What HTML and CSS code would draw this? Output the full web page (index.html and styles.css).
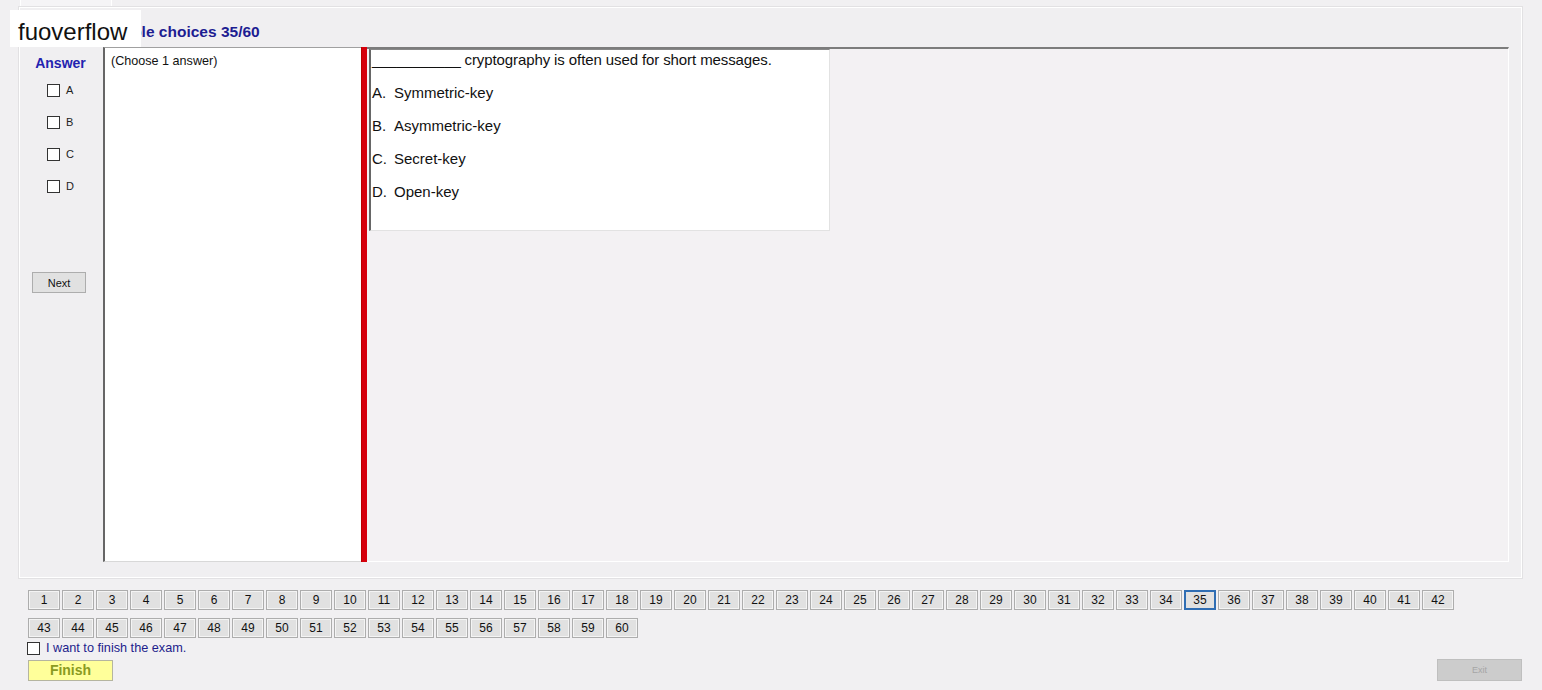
FILE: index.html
```html
<!DOCTYPE html>
<html lang="en">
<head>
    <meta charset="UTF-8">
    <title>Exam</title>
    <link rel="stylesheet" href="styles.css">
</head>

<body>
    <div class="top-tab"></div>

    <!-- Question group -->
    <div class="group">
        <div class="title">Multiple choices 35/60</div>
        <div class="content">
            <div class="answers">
                <div class="answers-head">Answer</div>
                <label class="opt"><span class="box"></span>A</label>
                <label class="opt"><span class="box"></span>B</label>
                <label class="opt"><span class="box"></span>C</label>
                <label class="opt"><span class="box"></span>D</label>
                <button class="next-btn">Next</button>
            </div>
            <div class="split">
                <div class="left-pane">(Choose 1 answer)</div>
                <div class="splitter"></div>
                <div class="right-pane">
                    <div class="question">
                        <p class="q-text"><span class="blank">___________</span> cryptography is often used for short messages.</p>
                        <p class="q-opt"><span class="q-key">A.</span>Symmetric-key</p>
                        <p class="q-opt"><span class="q-key">B.</span>Asymmetric-key</p>
                        <p class="q-opt"><span class="q-key">C.</span>Secret-key</p>
                        <p class="q-opt"><span class="q-key">D.</span>Open-key</p>
                    </div>
                </div>
            </div>
        </div>
    </div>

    <!-- Question navigation -->
    <div class="nav">
        <button>1</button><button>2</button><button>3</button><button>4</button><button>5</button>
        <button>6</button><button>7</button><button>8</button><button>9</button><button>10</button>
        <button>11</button><button>12</button><button>13</button><button>14</button><button>15</button>
        <button>16</button><button>17</button><button>18</button><button>19</button><button>20</button>
        <button>21</button><button>22</button><button>23</button><button>24</button><button>25</button>
        <button>26</button><button>27</button><button>28</button><button>29</button><button>30</button>
        <button>31</button><button>32</button><button>33</button><button>34</button><button class="current">35</button>
        <button>36</button><button>37</button><button>38</button><button>39</button><button>40</button>
        <button>41</button><button>42</button><button>43</button><button>44</button><button>45</button>
        <button>46</button><button>47</button><button>48</button><button>49</button><button>50</button>
        <button>51</button><button>52</button><button>53</button><button>54</button><button>55</button>
        <button>56</button><button>57</button><button>58</button><button>59</button><button>60</button>
    </div>

    <label class="finish-check"><span class="box"></span>I want to finish the exam.</label>

    <div class="bottom">
        <button class="finish-btn">Finish</button>
        <button class="exit-btn" disabled>Exit</button>
    </div>

    <div class="watermark">fuoverflow</div>
</body>

</html>
```

FILE: styles.css
```css
/* General Styles */
body {
    margin: 0;
    height: 690px;
    overflow: hidden;
    background: #f1f0f2;
    font-family: "Liberation Sans", Arial, sans-serif;
    color: #000;
}

button {
    font-family: "Liberation Sans", Arial, sans-serif;
    cursor: pointer;
}

.top-tab {
    margin-left: 20px;
    width: 90px;
    height: 7px;
    border-left: 1px solid #fff;
    border-right: 1px solid #fff;
    background: #f5f4f6;
}

.group {
    box-sizing: border-box;
    height: 571px;
    margin: 0 20px 0 19px;
    border: 1px solid #fff;
    box-shadow: 0 0 0 1px #e2e1e3;
    background: #f0eff1;
}

.title {
    height: 39px;
    box-sizing: border-box;
    padding: 15px 0 0 76px;
    font-size: 15.5px;
    font-weight: bold;
    color: #1d1d92;
}

.content {
    display: flex;
    height: 515px;
}

/* Answer column */
.answers {
    width: 83px;
    display: flex;
    flex-direction: column;
    align-items: flex-start;
}

.answers-head {
    align-self: center;
    margin: 8px 0 9px -2px;
    font-size: 14px;
    font-weight: bold;
    color: #2323b0;
}

.opt {
    display: flex;
    align-items: center;
    height: 32px;
    margin-top: -6px;
    margin-bottom: 6px;
    padding-left: 27px;
    font-size: 11px;
    color: #222;
}

.box {
    display: inline-block;
    width: 11px;
    height: 11px;
    border: 1px solid #333;
    background: #fff;
    margin-right: 6px;
}

.next-btn {
    margin: 64px 0 0 12px;
    width: 54px;
    height: 21px;
    padding: 0;
    font-size: 11px;
    background: #e1e1e1;
    border: 1px solid #adadad;
    color: #111;
}

/* Split container */
.split {
    flex: 1;
    display: flex;
    margin-right: 12px;
}

.left-pane {
    width: 250px;
    background: #fff;
    border-top: 1px solid #a0a0a0;
    border-left: 2px solid #666;
    border-bottom: 1px solid #d8d8d8;
    padding: 6px 0 0 6px;
    font-size: 12.6px;
    color: #111;
}

.splitter {
    width: 6px;
    background: #d6000c;
    border-left: 1px solid #b00;
    box-sizing: border-box;
}

.right-pane {
    flex: 1;
    border-top: 2px solid #7c7c7c;
    border-right: 1px solid #fff;
    border-bottom: 1px solid #fff;
    background: #f3f1f3;
}

.question {
    box-sizing: border-box;
    width: 461px;
    height: 182px;
    margin-left: 2px;
    background: #fff;
    border-left: 2px solid #666;
    border-top: 1px solid #888;
    border-right: 1px solid #e2e2e2;
    border-bottom: 1px solid #e2e2e2;
    padding-left: 1px;
    font-size: 15px;
    color: #111;
}

.blank {
    letter-spacing: -0.3px;
}

.q-text {
    margin: 1px 0 0;
    line-height: 18px;
    letter-spacing: -0.1px;
}

.q-opt {
    margin: 15px 0 0;
    line-height: 18px;
}

.q-key {
    display: inline-block;
    width: 22px;
}

/* Navigation */
.nav {
    display: grid;
    grid-template-columns: repeat(42, 32px);
    column-gap: 2px;
    row-gap: 8px;
    margin: 12px 0 0 28px;
}

.nav button {
    height: 20px;
    padding: 0;
    font-size: 12px;
    background: #e1e1e1;
    border: 1px solid #adadad;
    box-shadow: inset 0 0 0 1px #f4f4f4;
    color: #111;
}

.nav button.current {
    border: 2px solid #2f6db3;
    box-shadow: none;
}

.finish-check {
    display: flex;
    align-items: center;
    margin: 2px 0 0 27px;
    height: 16px;
    font-size: 12.7px;
    color: #1d1d8c;
}

.bottom {
    display: flex;
    justify-content: space-between;
    align-items: center;
    margin: 3px 20px 0 28px;
}

.finish-btn {
    width: 85px;
    height: 21px;
    padding: 0;
    background: #ffff9a;
    border: 1px solid #b5b5a0;
    font-size: 14px;
    font-weight: bold;
    color: #8a9a22;
}

.exit-btn {
    width: 85px;
    height: 22px;
    padding: 0;
    background: #cccccc;
    border: 1px solid #bfbfbf;
    font-size: 9px;
    color: #a6a6a6;
}

.watermark {
    position: absolute;
    left: 10px;
    top: 10px;
    width: 131px;
    height: 37px;
    box-sizing: border-box;
    padding: 8px 0 0 8px;
    background: #fff;
    font-size: 24px;
    color: #111;
}
```
